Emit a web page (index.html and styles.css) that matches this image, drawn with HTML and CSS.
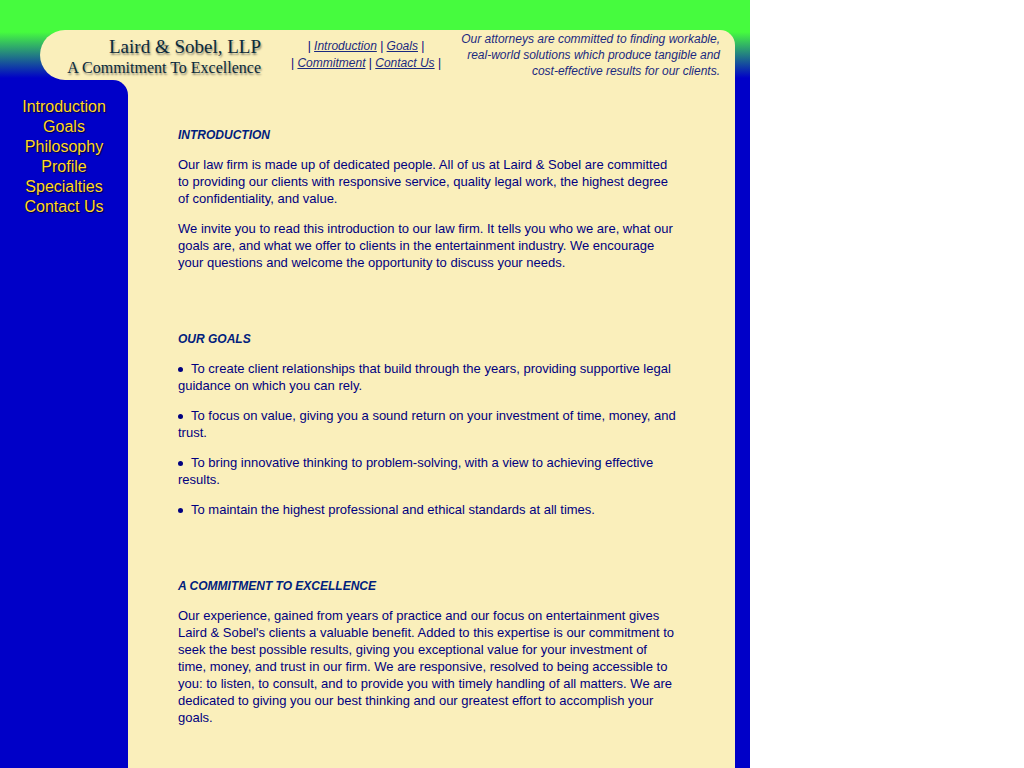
FILE: index.html
```html
<!DOCTYPE html>
<html lang="en">
<head>
  <meta charset="UTF-8" />
  <meta name="viewport" content="width=device-width, initial-scale=1.0"/>
  <title>Laird &amp; Sobel, LLP</title>
  <link rel="stylesheet" href="styles.css">
</head>
<body>

  <div class="page">
    <header class="header">
      <div class="logo">
        <div class="firm">Laird &amp; Sobel, LLP</div>
        <div class="motto">A Commitment To Excellence</div>
      </div>
      <nav class="topnav">
        | <a href="#introduction">Introduction</a> | <a href="#goals">Goals</a> |<br>
        | <a href="#commitment">Commitment</a> | <a href="#contact">Contact Us</a> |
      </nav>
      <p class="tagline">Our attorneys are committed to finding workable,<br>
        real-world solutions which produce tangible and<br>
        cost-effective results for our clients.</p>
    </header>

    <div class="columns">
      <nav class="sidebar">
        <a href="#introduction">Introduction</a>
        <a href="#goals">Goals</a>
        <a href="#philosophy">Philosophy</a>
        <a href="#profile">Profile</a>
        <a href="#specialties">Specialties</a>
        <a href="#contact">Contact Us</a>
      </nav>

      <main class="content">
        <section id="introduction">
          <h2>INTRODUCTION</h2>
          <p>Our law firm is made up of dedicated people. All of us at Laird &amp; Sobel are committed<br>
            to providing our clients with responsive service, quality legal work, the highest degree<br>
            of confidentiality, and value.</p>
          <p>We invite you to read this introduction to our law firm. It tells you who we are, what our<br>
            goals are, and what we offer to clients in the entertainment industry. We encourage<br>
            your questions and welcome the opportunity to discuss your needs.</p>
        </section>

        <section id="goals">
          <h2>OUR GOALS</h2>
          <ul>
            <li>To create client relationships that build through the years, providing supportive legal<br>
              guidance on which you can rely.</li>
            <li>To focus on value, giving you a sound return on your investment of time, money, and<br>
              trust.</li>
            <li>To bring innovative thinking to problem-solving, with a view to achieving effective<br>
              results.</li>
            <li>To maintain the highest professional and ethical standards at all times.</li>
          </ul>
        </section>

        <section id="commitment">
          <h2>A COMMITMENT TO EXCELLENCE</h2>
          <p>Our experience, gained from years of practice and our focus on entertainment gives<br>
            Laird &amp; Sobel's clients a valuable benefit. Added to this expertise is our commitment to<br>
            seek the best possible results, giving you exceptional value for your investment of<br>
            time, money, and trust in our firm. We are responsive, resolved to being accessible to<br>
            you: to listen, to consult, and to provide you with timely handling of all matters. We are<br>
            dedicated to giving you our best thinking and our greatest effort to accomplish your<br>
            goals.</p>
        </section>
      </main>
    </div>
  </div>

</body>
</html>
```

FILE: styles.css
```css
* {
  box-sizing: border-box;
}
body {
  margin: 0;
  background: #ffffff;
  color: #000080;
  font-family: "Liberation Sans", Arial, Helvetica, sans-serif;
  font-size: 13px;
  line-height: 17px;
}
.page {
  display: flex;
  flex-direction: column;
  max-width: 750px;
  min-height: 100vh;
  padding: 30px 15px 0 0;
  background: #0000c8 linear-gradient(#46fb3e 32px, #0000c8 78px);
}

/* header */
.header {
  display: flex;
  height: 50px;
  margin-left: 40px;
  padding-right: 15px;
  background: #faefbb;
  border-radius: 25px 15px 0 25px;
  font-size: 12px;
}
.logo {
  width: 221px;
  padding-top: 5px;
  text-align: right;
  white-space: nowrap;
  color: #0a2a3c;
  font-family: "Liberation Serif", "Times New Roman", serif;
  text-shadow: 1px 2px 2px #8f8a70;
}
.firm {
  font-size: 19px;
  line-height: 23px;
}
.motto {
  font-size: 16px;
  line-height: 20px;
}
.topnav {
  margin: 0 auto 0 30px;
  padding-top: 8px;
  text-align: center;
}
.topnav a {
  color: #1a2a80;
  font-style: italic;
}
.tagline {
  margin: 0;
  padding-top: 1px;
  text-align: right;
  color: #1a2a80;
  font-style: italic;
  line-height: 16px;
}

/* sidebar and text */
.columns {
  display: flex;
  flex: 1;
  background: #faefbb;
}
.sidebar {
  display: flex;
  flex-direction: column;
  flex: none;
  width: 128px;
  padding-top: 17px;
  background: #0000c8;
  border-radius: 0 15px 0 0;
  text-align: center;
}
.sidebar a {
  color: #ffd820;
  font-size: 16px;
  line-height: 20px;
  text-decoration: none;
  text-shadow: 1px 1px 1px #000040;
}
.content {
  flex: 1;
  padding: 47px 40px 30px 50px;
}
section {
  margin-bottom: 60px;
}
section:last-child {
  margin-bottom: 0;
}
h2 {
  margin: 0 0 12px;
  color: #00207d;
  font-size: 12px;
  font-style: italic;
  line-height: 17px;
}
p,
ul {
  margin: 0 0 13px;
}
ul {
  padding: 0;
  list-style: none;
}
li {
  margin-bottom: 13px;
}
li::before {
  content: "";
  display: inline-block;
  width: 5px;
  height: 5px;
  margin-right: 8px;
  border-radius: 50%;
  background: #000080;
  vertical-align: middle;
}
```
